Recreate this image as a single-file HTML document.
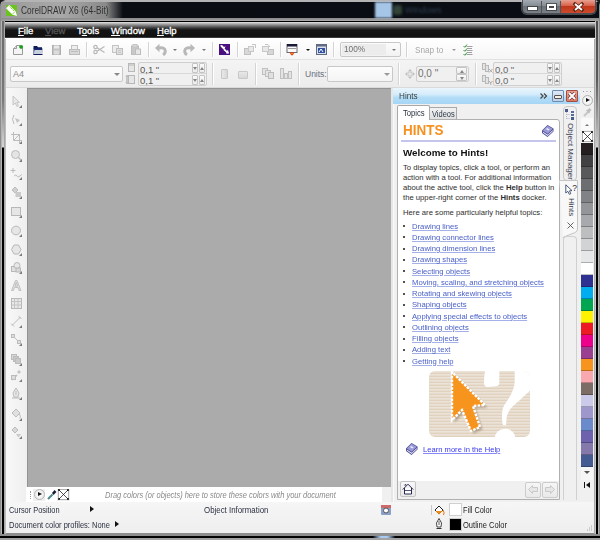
<!DOCTYPE html>
<html><head><meta charset="utf-8">
<style>
*{box-sizing:border-box;margin:0;padding:0}
html,body{width:600px;height:540px;overflow:hidden;background:#1a1a1a}
body{position:relative;font-family:"Liberation Sans",sans-serif;font-size:8px;color:#333;line-height:1}
.a{position:absolute}
.t{position:absolute;white-space:nowrap;transform-origin:0 0}
svg{position:absolute;overflow:visible}
/* frame */
#frame{left:0;top:0;width:600px;height:540px;background:#8c8c8c;border-radius:6px 6px 0 0}
#fl{left:1px;top:19px;width:5px;height:515px;background:linear-gradient(90deg,#b4b4b4 0,#b4b4b4 1px,transparent 1px,transparent 3px,#a8a8a8 3px,#a8a8a8 4px,#bcbcbc 4px)}
#fl2{left:2px;top:19px;width:2px;height:515px;background:linear-gradient(#6a6a6a,#787878 80px,#c8c8c8 120px,#d4d4d4 128px,#000 129px,#000)}
#fr{left:594px;top:19px;width:5px;height:515px;background:linear-gradient(90deg,#a8a8a8 0,#a8a8a8 1px,#c4c4c4 1px,#c4c4c4 2px,transparent 2px,transparent 4px,#b4b4b4 4px)}
#fr2{left:596px;top:19px;width:2px;height:515px;background:linear-gradient(#4a4a4a,#5a5a5a 60px,#c0c0c0 120px,#d0d0d0 128px,#000 129px,#000)}
#title{left:1px;top:2px;width:598px;height:17px;background:linear-gradient(90deg,#9a9a9a 0,#a8a8a8 60px,#8a8a8a 105px,#0a0d12 122px,#0a0e14 370px,#0a0e14 100%)}
#ttop{left:4px;top:0;width:592px;height:2px;background:#b4b4b4;border-radius:6px 6px 0 0}
#tbot{left:1px;top:18px;width:598px;height:3px;background:linear-gradient(#8a8a8a,#a0a0a0)}
#menubar{left:5px;top:20px;width:590px;height:19px;background:linear-gradient(#a8a8a8 0,#a8a8a8 1px,#000 1px,#000 2px,#e6e6e6 2px,#c8c8c8 3px,#8a8a8a 5px,#3a3a3a 8px,#151515 10px,#111 17px,#3a3a3a 17px,#3a3a3a 18px,#fff 18px)}
.menu{top:26px;color:#fff;font-size:9.5px;font-weight:normal;-webkit-text-stroke:0.3px currentColor}
.menu u{text-decoration-thickness:1px;text-underline-offset:1px}
#stdbar{left:6px;top:38px;width:588px;height:22px;background:linear-gradient(#ffffff,#f6f6f6);border-bottom:1px solid #e2e2e2}
#propbar{left:6px;top:60px;width:588px;height:28px;background:linear-gradient(#f4f4f4,#ececec);border-bottom:1px solid #dadada}
.sep{position:absolute;width:1px;background:#d4d4d4;box-shadow:1px 0 0 #fff}
.combo{position:absolute;background:linear-gradient(#fbfbfb,#f2f2f2);border:1px solid #c8c8c8;border-radius:2px}
.ctext{position:absolute;color:#8a8a8a;font-size:9px}
.dd{position:absolute;width:0;height:0;border-left:3px solid transparent;border-right:3px solid transparent;border-top:3px solid #777}
.spinb{width:6px;height:10px;border:1px solid #c4c4c4;border-radius:1px;background:linear-gradient(#fafafa,#ececec)}
.spinb:after{content:"";position:absolute;left:0;top:3px;border-left:2px solid transparent;border-right:2px solid transparent;border-top:3px solid #858585}
.spinb.up:after{border-top:none;border-bottom:3px solid #858585}
.spinb.big:after{left:3px;top:1.5px}
#toolbox{left:6px;top:88px;width:21px;height:414px;background:linear-gradient(90deg,#f8f8f8,#efefef)}
.fly{width:0;height:0;border-left:3px solid transparent;border-bottom:3px solid #7a7a7a}
#canvas{left:27px;top:88px;width:364px;height:399px;background:#ababab;border-top:1px solid #939393;border-left:1px solid #939393}
#palbar{left:26px;top:487px;width:356px;height:15px;background:#fff}
#palbar2{left:382px;top:487px;width:11px;height:15px;background:#f0f0f0}
#docker{left:391px;top:88px;width:189px;height:414px;background:#f0f0f0;border-left:2px solid #e6e6e6}
#dline{left:393px;top:103px;width:1px;height:399px;background:#fafafa}
#dhead{left:393px;top:88px;width:187px;height:15.5px;background:linear-gradient(#eaf5fd,#d4ecfb 40%,#b2dcf7 60%,#a6d6f5)}
.bul{width:2px;height:2px;background:#333;opacity:.85}
.lnk{font-size:8px;color:#4a60c8;text-decoration:underline;text-decoration-color:#a4b0e8;transform:scaleX(0.96)}
.navb{width:16px;height:16px;border:1px solid #c4c4c4;border-radius:2px;background:linear-gradient(#f8f8f8,#e8e8e8)}
#palette{left:580px;top:88px;width:14px;height:414px;background:#f0f0f0}
#status{left:6px;top:502px;width:588px;height:31px;background:linear-gradient(#f6f6f6,#eeeeee)}
#bottom{left:0;top:534px;width:600px;height:6px;background:linear-gradient(#8e8e8e 0,#8e8e8e 1.5px,#050505 1.5px,#000 4px,#a2a2a2 4px)}
</style></head>
<body>
<div id="frame" class="a"></div>
<div id="fl2" class="a"></div><div id="fl" class="a"></div>
<div id="fr2" class="a"></div><div id="fr" class="a"></div>
<div id="title" class="a"></div>
<div id="ttop" class="a"></div>
<div id="tbot" class="a"></div>
<!-- title content -->
<svg style="left:6px;top:5px" width="11" height="11" viewBox="0 0 11 11"><rect width="11" height="11" fill="#6cc21e"/><path d="M0 3.3 L3.3 0 L9.8 6.6 L11 11 L6.6 9.8 Z" fill="#fff"/><path d="M3.6 1.6 L8.4 6.4" stroke="#6cc21e" stroke-width="1" stroke-dasharray="1.4 0.9"/><path d="M6.3 9.3 L9.3 6.3" stroke="#6cc21e" stroke-width="0.7"/></svg>
<div class="t" style="left:21px;top:5px;font-size:11px;color:#333;transform:scaleX(0.76)">CorelDRAW X6 (64-Bit)</div>
<!-- fake windows bg in title -->
<div class="a" style="left:375px;top:2px;width:17px;height:16px;background:#a6c6e8;filter:blur(0.8px)"></div>
<div class="a" style="left:393px;top:5px;width:9px;height:10px;background:#5a7a5a;opacity:.5;border-radius:3px;filter:blur(1.5px)"></div>
<div class="t" style="left:405px;top:5.5px;font-size:9px;color:#3a4a60;opacity:.75;filter:blur(1.3px)">Windows</div>
<!-- caption buttons -->
<div class="a" style="left:522px;top:0;width:74px;height:14px;border:1px solid #4a4e54;border-top:none;border-radius:0 0 5px 5px;background:linear-gradient(#a4aab2,#868c94 45%,#6c7279 50%,#7a8088);box-shadow:0 0 0 1px rgba(255,255,255,.25)"></div>
<div class="a" style="left:541px;top:1px;width:1px;height:12px;background:#50545a"></div>
<div class="a" style="left:560px;top:1px;width:1px;height:12px;background:#50545a"></div>
<div class="a" style="left:561px;top:0;width:34px;height:13px;border-radius:0 0 4px 0;background:linear-gradient(#e8a090,#d8604a 45%,#c0381c 50%,#cc4a2c)"></div>
<div class="a" style="left:528px;top:7px;width:9px;height:3px;background:#fff;box-shadow:0 0 0 1px rgba(40,40,40,.6)"></div>
<div class="a" style="left:547px;top:4px;width:9px;height:6px;border:2px solid #fff;box-shadow:0 0 0 1px rgba(40,40,40,.6), inset 0 0 0 1px rgba(40,40,40,.6)"></div>
<svg style="left:574px;top:3px" width="9" height="8" viewBox="0 0 9 8"><path d="M1 1 L8 7 M8 1 L1 7" stroke="#5a2010" stroke-width="3.2" stroke-linecap="square"/><path d="M1 1 L8 7 M8 1 L1 7" stroke="#fff" stroke-width="1.8"/></svg>
<div id="menubar" class="a"></div>
<div class="t menu" style="left:18px"><u>F</u>ile</div>
<div class="t menu" style="left:45px;color:#555"><u>V</u>iew</div>
<div class="t menu" style="left:77px">T<u>o</u>ols</div>
<div class="t menu" style="left:111px"><u>W</u>indow</div>
<div class="t menu" style="left:157px"><u>H</u>elp</div>

<div id="stdbar" class="a"></div>
<div id="propbar" class="a"></div>
<!-- std toolbar content -->
<svg style="left:13px;top:45px" width="10" height="10" viewBox="0 0 10 10"><path d="M0.5 3.5 L3.5 0.5 L7 0.5 L7 3 L9.5 3 L9.5 9.5 L0.5 9.5 Z" fill="#f4f4f4" stroke="#9a9a9a"/><path d="M0.5 3.5 L3.5 3.5 L3.5 0.5" fill="#ddd" stroke="#9a9a9a"/><circle cx="8.2" cy="1.8" r="1.9" fill="#1aa01a"/></svg>
<svg style="left:33px;top:45px" width="10" height="10" viewBox="0 0 10 10"><path d="M0.5 1 L4 1 L5 2.2 L9 2.2 L9 4 L0.5 4 Z" fill="#0c1a5a"/><path d="M0.5 3.5 L9.5 3.5 L9 9.5 L0.5 9.5 Z" fill="#1a2a6a"/><path d="M1.5 5 L10 5 L9 9 L0.8 9 Z" fill="#c8d0e0"/><path d="M0.5 9.5 L9.5 9.5" stroke="#0c1a5a"/></svg>
<svg style="left:52px;top:45px" width="9" height="10" viewBox="0 0 9 10"><rect x="0.5" y="0.5" width="8" height="9" fill="#c4c4c4" stroke="#b0b0b0"/><rect x="2" y="0.5" width="5" height="3" fill="#e8e8e8"/><rect x="2" y="5.5" width="5" height="4" fill="#dcdcdc"/></svg>
<svg style="left:69px;top:45px" width="11" height="10" viewBox="0 0 11 10"><rect x="2.5" y="0.5" width="6" height="4" fill="#eee" stroke="#c0c0c0"/><rect x="0.5" y="4.5" width="10" height="5" fill="#d8d8d8" stroke="#bcbcbc"/><rect x="2" y="6" width="7" height="1" fill="#bdbdbd"/></svg>
<div class="sep" style="left:86px;top:42px;height:15px"></div>
<svg style="left:93px;top:45px" width="12" height="9" viewBox="0 0 12 9"><circle cx="2.5" cy="2" r="1.7" fill="none" stroke="#b8b8b8" stroke-width="1.2"/><circle cx="2.5" cy="7" r="1.7" fill="none" stroke="#b8b8b8" stroke-width="1.2"/><path d="M4 2.8 L11.5 7.5 M4 6.2 L11.5 1.5" stroke="#b8b8b8" stroke-width="1.2"/></svg>
<svg style="left:112px;top:45px" width="11" height="10" viewBox="0 0 11 10"><rect x="0.5" y="0.5" width="6" height="7" fill="#ececec" stroke="#c4c4c4"/><rect x="4.5" y="3.5" width="6" height="6" fill="#e0e0e0" stroke="#bdbdbd"/><path d="M6 5.5h3M6 7.5h3" stroke="#c8c8c8"/></svg>
<svg style="left:131px;top:44px" width="10" height="11" viewBox="0 0 10 11"><rect x="0.5" y="2" width="7" height="8.5" fill="#c8c8c8" stroke="#bcbcbc"/><rect x="2" y="0.5" width="4" height="2.5" fill="#dadada" stroke="#c4c4c4"/><rect x="4.5" y="5" width="5" height="5.5" fill="#e6e6e6" stroke="#bdbdbd"/></svg>
<div class="sep" style="left:148px;top:42px;height:15px"></div>
<svg style="left:154px;top:43px" width="14" height="13" viewBox="0 0 14 13"><path d="M1 5 L5.5 0.8 L5.5 9.2 Z" fill="#b8b8b8"/><path d="M5 5 Q11 4 11.3 8 Q11.3 10.5 9 11.8" stroke="#b8b8b8" stroke-width="3" fill="none"/></svg>
<div class="dd" style="left:173px;top:49px;border-left-width:2px;border-right-width:2px;border-top:2px solid #777"></div>
<svg style="left:182px;top:43px" width="14" height="13" viewBox="0 0 14 13"><path d="M13 5 L8.5 0.8 L8.5 9.2 Z" fill="#b8b8b8"/><path d="M9 5 Q3 4 2.7 8 Q2.7 10.5 5 11.8" stroke="#b8b8b8" stroke-width="3" fill="none"/></svg>
<div class="dd" style="left:202px;top:49px;border-left-width:2px;border-right-width:2px;border-top:2px solid #777"></div>
<div class="sep" style="left:212px;top:42px;height:15px"></div>
<svg style="left:219px;top:44px" width="11" height="11" viewBox="0 0 11 11"><rect width="11" height="11" fill="#4a1080"/><path d="M1 1.5 L3 1 L5 3 L6.5 2.2 L5.5 5 L4 4 Z" fill="#fff"/><path d="M4.5 6 L6 5.3 L7.5 7 L9 6 L10 9.5 L7 9.5 L7.5 8.5 Z" fill="#fff"/><path d="M2 2 L9 9" stroke="#fff" stroke-width="1.2"/></svg>
<div class="sep" style="left:237px;top:42px;height:15px"></div>
<svg style="left:244px;top:44px" width="12" height="11" viewBox="0 0 12 11"><rect x="0.5" y="4.5" width="6" height="6" fill="#d8d8d8" stroke="#c0c0c0"/><rect x="4.5" y="2.5" width="5" height="5" fill="#e8e8e8" stroke="#c8c8c8"/><path d="M8 0.5 L11.5 0.5 L11.5 4" stroke="#c4c4c4" fill="none"/></svg>
<svg style="left:262px;top:44px" width="12" height="11" viewBox="0 0 12 11"><rect x="5.5" y="5.5" width="6" height="5" fill="#d8d8d8" stroke="#c0c0c0"/><rect x="0.5" y="2.5" width="6" height="5" fill="#e8e8e8" stroke="#c8c8c8"/><path d="M3 0.5 L6 0.5 L8 3" stroke="#c4c4c4" fill="none"/></svg>
<div class="sep" style="left:280px;top:42px;height:15px"></div>
<svg style="left:287px;top:44px" width="10" height="12" viewBox="0 0 10 12"><rect x="0" y="0.5" width="10" height="8" fill="#fafafa" stroke="#6a6a6a" stroke-width="1"/><rect x="0" y="0" width="10" height="2.5" fill="#1a1a3a"/><rect x="1" y="4" width="8" height="1" fill="#9a9a9a"/><path d="M3 9 Q5 7 7 9 Q6 11.5 5 11.5 Q4 11.5 3 9 Z" fill="#e83010"/><path d="M4 9.5 Q5 8.5 6 9.5 Q5.5 10.5 5 10.5 Z" fill="#f8c020"/></svg>
<div class="dd" style="left:306px;top:49px;border-left-width:2px;border-right-width:2px;border-top:2px solid #111"></div>
<svg style="left:316px;top:44px" width="11" height="11" viewBox="0 0 11 11"><rect x="0.5" y="0.5" width="10" height="10" fill="#d8e0ec" stroke="#606a80"/><rect x="0.5" y="0.5" width="10" height="2" fill="#606a80"/><rect x="2" y="4" width="7" height="5" fill="#3050a0"/><path d="M3 8 L5 5 L7 8" stroke="#fff" fill="none"/></svg>
<div class="sep" style="left:333px;top:42px;height:15px"></div>
<div class="combo" style="left:340px;top:42px;width:61px;height:15px"></div>
<div class="a" style="left:342px;top:44px;width:44px;height:11px;background:#ececec"></div>
<div class="ctext" style="left:344px;top:45px;font-size:9.2px;color:#6e6e6e;transform:scaleX(0.9);transform-origin:0 0">100%</div>
<div class="dd" style="left:392px;top:49px;border-left-width:2.5px;border-right-width:2.5px;border-top:2.5px solid #777"></div>
<div class="sep" style="left:406px;top:42px;height:15px"></div>
<div class="ctext" style="left:415px;top:45.5px;font-size:9.3px;color:#a8a8a8;transform:scaleX(0.88);transform-origin:0 0">Snap to</div>
<div class="dd" style="left:452px;top:49px;border-left-width:2px;border-right-width:2px;border-top:2px solid #999"></div>
<svg style="left:463px;top:44px" width="11" height="12" viewBox="0 0 11 12"><path d="M0.5 2 L1.8 3.3 L4 0.5 M0.5 6 L1.8 7.3 L4 4.5 M0.5 10 L1.8 11.3 L4 8.5" stroke="#3a9a3a" fill="none" stroke-width="1"/><path d="M3.5 2.5h6M3.5 6.5h6M3.5 10.5h6M4 4.5h5M4 8.5h5" stroke="#8a8a8a" stroke-width="0.8"/></svg>


<!-- property bar content -->
<div class="combo" style="left:10px;top:66px;width:113px;height:16px;background:linear-gradient(#fdfdfd,#f4f4f4)"></div>
<div class="ctext" style="left:13px;top:70px;font-size:9px;color:#8a8a8a">A4</div>
<div class="dd" style="left:114px;top:73px;border-top-color:#888"></div>
<svg style="left:128px;top:63px" width="7" height="9" viewBox="0 0 7 9"><rect x="0.5" y="0.5" width="6" height="8" fill="#e6e6e6" stroke="#b8b8b8"/><path d="M0.5 2h6" stroke="#b8b8b8"/></svg>
<svg style="left:126px;top:75px" width="9" height="9" viewBox="0 0 9 9"><rect x="2.5" y="0.5" width="6" height="8" fill="#e6e6e6" stroke="#b8b8b8"/><path d="M1 0.5v8M0 1.5l1-1 1 1M0 7.5l1 1 1-1" stroke="#a0a0a0" fill="none"/></svg>
<div class="combo" style="left:138px;top:62px;width:69px;height:24px;background:#f0f0f0;border-color:#cfcfcf"></div>
<div class="a" style="left:139px;top:73px;width:67px;height:1px;background:#d8d8d8"></div>
<div class="ctext" style="left:140px;top:65px;font-size:9.5px;color:#555">0,1 "</div>
<div class="ctext" style="left:140px;top:76px;font-size:9.5px;color:#555">0,1 "</div>
<div class="a spinb" style="left:192px;top:63px"></div><div class="a spinb up" style="left:199px;top:63px"></div>
<div class="a spinb" style="left:192px;top:75px"></div><div class="a spinb up" style="left:199px;top:75px"></div>
<div class="sep" style="left:212px;top:63px;height:22px"></div>
<div class="a" style="left:221px;top:69px;width:7px;height:10px;border:1px solid #c8c8c8;border-radius:1px;background:linear-gradient(90deg,#e8e8e8,#d8d8d8)"></div>
<div class="a" style="left:238px;top:71px;width:10px;height:8px;border:1px solid #c8c8c8;border-radius:1px;background:linear-gradient(#e8e8e8,#d8d8d8)"></div>
<div class="sep" style="left:255px;top:63px;height:22px"></div>
<svg style="left:262px;top:68px" width="12" height="11" viewBox="0 0 12 11"><rect x="0.5" y="0.5" width="5" height="6" fill="#e4e4e4" stroke="#c0c0c0"/><rect x="3.5" y="2.5" width="5" height="6" fill="#e4e4e4" stroke="#c0c0c0"/><rect x="6.5" y="4.5" width="5" height="6" fill="#e0e0e0" stroke="#bcbcbc"/></svg>
<svg style="left:280px;top:68px" width="12" height="11" viewBox="0 0 12 11"><rect x="0.5" y="0.5" width="3" height="10" fill="#e4e4e4" stroke="#c0c0c0"/><rect x="4.5" y="5.5" width="3" height="5" fill="#e4e4e4" stroke="#c0c0c0"/><rect x="8.5" y="3.5" width="3" height="7" fill="#e4e4e4" stroke="#c0c0c0"/></svg>
<div class="sep" style="left:298px;top:63px;height:22px"></div>
<div class="ctext" style="left:305px;top:70px;font-size:8.5px;color:#6a7080">Units:</div>
<div class="combo" style="left:327px;top:66px;width:66px;height:16px;background:linear-gradient(#fdfdfd,#f4f4f4)"></div>
<div class="dd" style="left:384px;top:73px;border-top-color:#999"></div>
<div class="sep" style="left:398px;top:63px;height:22px"></div>
<svg style="left:405px;top:69px" width="10" height="10" viewBox="0 0 10 10"><path d="M5 0 L7 2.2 L3 2.2 Z M5 10 L3 7.8 L7 7.8 Z M0 5 L2.2 3 L2.2 7 Z M10 5 L7.8 7 L7.8 3 Z" fill="#c0c0c0"/><rect x="3" y="3" width="4" height="4" fill="#e8e8e8" stroke="#c4c4c4" stroke-width="0.8"/></svg>
<div class="combo" style="left:416px;top:66px;width:53px;height:16px;background:#f0f0f0;border-color:#cfcfcf"></div>
<div class="ctext" style="left:418px;top:69px;font-size:10px;color:#707070">0,0 "</div>
<div class="a spinb up big" style="left:456px;top:67px;width:11px;height:7px"></div>
<div class="a spinb big" style="left:456px;top:74px;width:11px;height:7px"></div>
<div class="sep" style="left:475px;top:63px;height:22px"></div>
<svg style="left:482px;top:63px" width="11" height="10" viewBox="0 0 11 10"><rect x="0.5" y="0.5" width="3" height="6" fill="#e4e4e4" stroke="#b8b8b8"/><rect x="3.5" y="2.5" width="3" height="6" fill="#e4e4e4" stroke="#b8b8b8"/><path d="M7 6 L10.5 9.5 M10.5 6 L7 9.5" stroke="#a8a8a8"/></svg>
<svg style="left:482px;top:75px" width="11" height="10" viewBox="0 0 11 10"><rect x="0.5" y="0.5" width="3" height="6" fill="#e4e4e4" stroke="#b8b8b8"/><rect x="3.5" y="2.5" width="3" height="6" fill="#e4e4e4" stroke="#b8b8b8"/><path d="M7 6 L8.75 8 L10.5 6 M8.75 8 L8.75 9.8" stroke="#a8a8a8" fill="none"/></svg>
<div class="combo" style="left:493px;top:62px;width:69px;height:24px;background:#f0f0f0;border-color:#cfcfcf"></div>
<div class="a" style="left:494px;top:73px;width:67px;height:1px;background:#d8d8d8"></div>
<div class="ctext" style="left:495px;top:65px;font-size:9.5px;color:#666">0,0 "</div>
<div class="ctext" style="left:495px;top:76px;font-size:9.5px;color:#666">0,0 "</div>
<div class="a spinb" style="left:547px;top:63px"></div><div class="a spinb up" style="left:554px;top:63px"></div>
<div class="a spinb" style="left:547px;top:75px"></div><div class="a spinb up" style="left:554px;top:75px"></div>
<div id="toolbox" class="a"></div>
<!-- toolbox icons -->
<svg style="left:11px;top:96px" width="11" height="11" viewBox="0 0 11 11"><path d="M2 0 L2 9 L4.2 7 L6 10.5 L7.5 9.8 L5.8 6.5 L8.5 6.3 Z" fill="#e8e8e8" stroke="#bcbcbc" stroke-width="0.8"/></svg>
<div class="a fly" style="left:19px;top:105px"></div>
<svg style="left:11px;top:114px" width="11" height="11" viewBox="0 0 11 11"><path d="M3 1 Q0 5 3 10" stroke="#bcbcbc" fill="none"/><path d="M4 4 L9 6 L6 9 Z" fill="#c4c4c4"/></svg>
<div class="a fly" style="left:19px;top:123px"></div>
<svg style="left:11px;top:132px" width="11" height="11" viewBox="0 0 11 11"><path d="M2.5 0v8.5h8.5M0 2.5h8.5v8.5" stroke="#bcbcbc" fill="none"/><path d="M3 8 L9 2" stroke="#bcbcbc"/></svg>
<div class="a fly" style="left:19px;top:141px"></div>
<svg style="left:11px;top:150px" width="11" height="11" viewBox="0 0 11 11"><circle cx="4.5" cy="4.5" r="4" fill="#e4e4e4" stroke="#bcbcbc"/><path d="M7.5 7.5 L10.5 10.5" stroke="#bcbcbc" stroke-width="1.4"/></svg>
<div class="a fly" style="left:19px;top:159px"></div>
<svg style="left:11px;top:168px" width="11" height="11" viewBox="0 0 11 11"><path d="M2 0v5M-0.5 2.5h5" stroke="#bcbcbc"/><path d="M3 8 Q5 6 6 8 T9 8 T11 7" stroke="#bcbcbc" fill="none"/></svg>
<div class="a fly" style="left:19px;top:177px"></div>
<svg style="left:11px;top:187px" width="11" height="11" viewBox="0 0 11 11"><path d="M1 3 L4 0 L7 3 L4 6 Z" fill="#d0d0d0" stroke="#bcbcbc"/><rect x="4.5" y="5" width="5.5" height="5" fill="#cacaca"/></svg>
<div class="a fly" style="left:19px;top:196px"></div>
<svg style="left:11px;top:206px" width="11" height="11" viewBox="0 0 11 11"><rect x="0.5" y="1.5" width="9" height="8" fill="#e6e6e6" stroke="#b8b8b8"/></svg>
<div class="a fly" style="left:19px;top:215px"></div>
<svg style="left:11px;top:225px" width="11" height="11" viewBox="0 0 11 11"><ellipse cx="5" cy="5.5" rx="4.5" ry="4.3" fill="#e6e6e6" stroke="#b8b8b8"/></svg>
<div class="a fly" style="left:19px;top:234px"></div>
<svg style="left:11px;top:244px" width="11" height="11" viewBox="0 0 11 11"><path d="M3 1 L7.5 1 L10 5.5 L7.5 10 L3 10 L0.5 5.5 Z" fill="#e6e6e6" stroke="#b8b8b8"/></svg>
<div class="a fly" style="left:19px;top:253px"></div>
<svg style="left:11px;top:262px" width="11" height="11" viewBox="0 0 11 11"><rect x="0.5" y="4.5" width="5" height="5" fill="#e0e0e0" stroke="#b8b8b8"/><circle cx="6" cy="3.5" r="3" fill="#e8e8e8" stroke="#b8b8b8"/><rect x="5" y="6" width="4.5" height="4" fill="#d8d8d8" stroke="#b8b8b8"/></svg>
<div class="a fly" style="left:19px;top:271px"></div>
<svg style="left:11px;top:280px" width="11" height="11" viewBox="0 0 11 11"><path d="M0.5 10.5 L4.5 0.5 L6 0.5 L10 10.5 L8 10.5 L7 7.5 L3.5 7.5 L2.5 10.5 Z M4 6 L6.5 6 L5.2 2.5 Z" fill="#e0e0e0" stroke="#b8b8b8" stroke-width="0.8"/></svg>
<svg style="left:11px;top:298px" width="11" height="11" viewBox="0 0 11 11"><rect x="0.5" y="0.5" width="10" height="10" fill="#e8e8e8" stroke="#b8b8b8"/><path d="M0.5 3.5h10M0.5 7h10M3.5 0.5v10M7 0.5v10" stroke="#c4c4c4"/></svg>
<svg style="left:11px;top:316px" width="11" height="11" viewBox="0 0 11 11"><path d="M1 9.5 L9.5 1 M0 7.5 L3 10.5 M7.5 0 L10.5 3" stroke="#bcbcbc"/></svg>
<div class="a fly" style="left:19px;top:325px"></div>
<svg style="left:11px;top:334px" width="11" height="11" viewBox="0 0 11 11"><rect x="0.5" y="0.5" width="3" height="3" fill="#ddd" stroke="#bcbcbc"/><rect x="6.5" y="6.5" width="3" height="3" fill="#ddd" stroke="#bcbcbc"/><path d="M3 3 L7 7" stroke="#bcbcbc"/></svg>
<div class="a fly" style="left:19px;top:343px"></div>
<svg style="left:11px;top:354px" width="11" height="11" viewBox="0 0 11 11"><rect x="0.5" y="0.5" width="5" height="5" fill="#d8d8d8" stroke="#bcbcbc"/><rect x="2.5" y="2.5" width="5" height="5" fill="#c8c8c8" stroke="#bcbcbc"/><rect x="4.5" y="4.5" width="5" height="5" fill="#cacaca" stroke="#bcbcbc"/></svg>
<div class="a fly" style="left:19px;top:363px"></div>
<svg style="left:11px;top:370px" width="11" height="11" viewBox="0 0 11 11"><path d="M1 10 L6 5" stroke="#bcbcbc" stroke-width="1.5"/><rect x="0.5" y="5.5" width="4" height="4" fill="#ddd" stroke="#bcbcbc"/><path d="M6 2 L8 0 L10 2 L8 4 Z" fill="#c4c4c4"/></svg>
<div class="a fly" style="left:19px;top:379px"></div>
<svg style="left:11px;top:388px" width="11" height="11" viewBox="0 0 11 11"><path d="M5 0 L8 5 L7 9 L3 9 L2 5 Z" fill="#e8e8e8" stroke="#bcbcbc"/><path d="M5 3v4" stroke="#bcbcbc"/><path d="M1 10h8" stroke="#b8b8b8"/></svg>
<div class="a fly" style="left:19px;top:397px"></div>
<svg style="left:11px;top:409px" width="11" height="11" viewBox="0 0 11 11"><path d="M1 4 L5 0 L9 4 L5 8 Z" fill="#e0e0e0" stroke="#bcbcbc"/><path d="M8.5 5 Q10 8 9 9.5" stroke="#bcbcbc" fill="none"/></svg>
<div class="a fly" style="left:19px;top:418px"></div>
<svg style="left:11px;top:427px" width="11" height="11" viewBox="0 0 11 11"><path d="M1 3 L4 0 L7 3 L4 6 Z" fill="#d8d8d8" stroke="#bcbcbc"/><path d="M5 7 L10 7 L7.5 10.5 Z" fill="#c8c8c8"/></svg>
<div class="a fly" style="left:19px;top:436px"></div>
<div id="canvas" class="a"></div>
<div id="palbar" class="a"></div>
<div id="palbar2" class="a"></div>
<div id="docker" class="a"></div>
<div id="dline" class="a"></div>
<div id="dhead" class="a"></div>

<!-- docker content -->
<div class="t" style="left:398.7px;top:91.8px;font-size:8.6px;color:#33403f;transform:scaleX(0.95)">Hints</div>
<svg style="left:540px;top:93px" width="8" height="6" viewBox="0 0 8 6"><path d="M0.5 0.5 L3 3 L0.5 5.5 M4 0.5 L6.5 3 L4 5.5" stroke="#4a4a4a" stroke-width="1.3" fill="none"/></svg>
<div class="a" style="left:552px;top:90px;width:12px;height:12px;border:1px solid #6f8bb0;border-radius:1px;background:linear-gradient(#dde8f5,#bcd0e8)"></div>
<div class="a" style="left:554px;top:95px;width:8px;height:4px;background:#f4efe6;border:1px solid #5a5050;border-radius:1px"></div>
<div class="a" style="left:566px;top:90px;width:12px;height:12px;border:1px solid #a05040;border-radius:1px;background:linear-gradient(#f0a090,#e07864)"></div>
<svg style="left:568px;top:92px" width="8" height="8" viewBox="0 0 8 8"><path d="M1 1 L7 7 M7 1 L1 7" stroke="#6a3a3a" stroke-width="3.4"/><path d="M1 1 L7 7 M7 1 L1 7" stroke="#fff" stroke-width="2"/></svg>
<!-- tabs -->
<div class="a" style="left:429px;top:107px;width:28px;height:13px;border:1px solid #a8a8a8;border-bottom:none;background:linear-gradient(#f2f2f2,#dedede)"></div>
<div class="t" style="left:432px;top:109.8px;font-size:8.8px;color:#2a3848;transform:scaleX(0.85)">Videos</div>
<div class="a" style="left:397px;top:119px;width:163px;height:381px;border:1px solid #b0b0b0;border-radius:0 3px 0 0;background:#fff"></div>
<div class="a" style="left:397px;top:105px;width:33px;height:15px;border:1px solid #a8a8a8;border-bottom:none;border-radius:2px 2px 0 0;background:#fff"></div>
<div class="t" style="left:402.7px;top:108.6px;font-size:8.8px;color:#2a3040;transform:scaleX(0.87)">Topics</div>
<div class="t" style="left:403.3px;top:122.8px;font-size:14.8px;font-weight:bold;color:#f7901e;transform:scaleX(0.91)">HINTS</div>
<svg style="left:541px;top:124px" width="14" height="14" viewBox="0 0 14 14"><path d="M1 6.5 L6.5 1 L12.5 4.5 L12.5 7.5 L6.5 13 L1 9 Z" fill="#4a4a90"/><path d="M1.8 6.5 L6.5 1.8 L11.8 4.8 L6.8 9.8 Z" fill="#9a9ad8"/><path d="M1.8 7.5 L6.8 10.8 L11.8 6 L11.8 7.3 L6.6 12 L1.8 8.6 Z" fill="#e8e8ff"/><path d="M6 4 L8.5 5.5 L7.5 6.5 L5 5 Z" fill="#fff" opacity=".85"/></svg>
<div class="a" style="left:401px;top:140px;width:155px;height:2px;background:#c4c4ec"></div>
<div class="t" style="left:403px;top:148.5px;font-size:9.2px;font-weight:bold;color:#111;transform:scaleX(1.065)">Welcome to Hints!</div>
<div class="t" style="left:403px;top:163.3px;font-size:7.7px;color:#2e2e2e;line-height:9.85px">To display topics, click a tool, or perform an<br>action with a tool. For additional information<br>about the active tool, click the <b>Help</b> button in<br>the upper-right corner of the <b>Hints</b> docker.</div>
<div class="t" style="left:403px;top:208.5px;font-size:7.7px;color:#2e2e2e">Here are some particularly helpful topics:</div>
<div class="a bul" style="left:403px;top:225.00px"></div><div class="t lnk" style="left:412px;top:222.50px">Drawing lines</div>
<div class="a bul" style="left:403px;top:236.25px"></div><div class="t lnk" style="left:412px;top:233.75px">Drawing connector lines</div>
<div class="a bul" style="left:403px;top:247.50px"></div><div class="t lnk" style="left:412px;top:245.00px">Drawing dimension lines</div>
<div class="a bul" style="left:403px;top:258.75px"></div><div class="t lnk" style="left:412px;top:256.25px">Drawing shapes</div>
<div class="a bul" style="left:403px;top:270.00px"></div><div class="t lnk" style="left:412px;top:267.50px">Selecting objects</div>
<div class="a bul" style="left:403px;top:281.25px"></div><div class="t lnk" style="left:412px;top:278.75px">Moving, scaling, and stretching objects</div>
<div class="a bul" style="left:403px;top:292.50px"></div><div class="t lnk" style="left:412px;top:290.00px">Rotating and skewing objects</div>
<div class="a bul" style="left:403px;top:303.75px"></div><div class="t lnk" style="left:412px;top:301.25px">Shaping objects</div>
<div class="a bul" style="left:403px;top:315.00px"></div><div class="t lnk" style="left:412px;top:312.50px">Applying special effects to objects</div>
<div class="a bul" style="left:403px;top:326.25px"></div><div class="t lnk" style="left:412px;top:323.75px">Outlining objects</div>
<div class="a bul" style="left:403px;top:337.50px"></div><div class="t lnk" style="left:412px;top:335.00px">Filling objects</div>
<div class="a bul" style="left:403px;top:348.75px"></div><div class="t lnk" style="left:412px;top:346.25px">Adding text</div>
<div class="a bul" style="left:403px;top:360.00px"></div><div class="t lnk" style="left:412px;top:357.50px">Getting help</div>

<!-- picture -->
<svg style="left:429px;top:371px" width="101" height="66" viewBox="0 0 101 66">
<defs><pattern id="st" width="4" height="3" patternUnits="userSpaceOnUse"><rect width="4" height="3" fill="#ece3d8"/><rect y="1.6" width="4" height="1.4" fill="#e0d2bf"/></pattern>
<filter id="bl" x="-20%" y="-20%" width="140%" height="140%"><feGaussianBlur stdDeviation="1"/></filter><clipPath id="rr"><rect width="101" height="66" rx="6"/></clipPath></defs>
<g clip-path="url(#rr)">
<rect width="101" height="66" fill="url(#st)"/>
<path d="M56 0 L70.3 0 L70.3 12.5 Q70 15 66 15.3 L59 16 Q55 16 55 12 Q55 6 56 0 Z" fill="#fff"/>
<path d="M85.7 0 L101 0 L101 19.7 C96 24 93 27 91 29 C87 32 84 35 82.3 37 C79 41 78 44 77.7 46.3 L77 54.3 L74.3 54.3 C73 52 73 49 73 42.3 C74 36 75 34 77 31.7 C80 27 82 24 83 21 C85 17 85.7 13 85.7 10.3 Z" fill="#fff"/>
<ellipse cx="76" cy="67" rx="10.3" ry="9.3" fill="#fff"/>
<path d="M25.5 3.5 L25.5 51.5 L35.5 41.5 L44.5 62.5 L53.5 58.5 L46.5 37.5 L58.5 36.5 Z" fill="#5a3a1a" opacity=".35" filter="url(#bl)"/>
<path d="M23 1 L23 49 L33 39 L42 60 L51 56 L44 35 L56 34 Z" fill="#f7941d" stroke="#fff" stroke-width="2.4" stroke-dasharray="2.6 1.2" stroke-linejoin="miter"/>
</g></svg>
<svg style="left:405px;top:442px" width="14" height="14" viewBox="0 0 14 14"><path d="M1 6.5 L6.5 1 L12.5 4.5 L12.5 7.5 L6.5 13 L1 9 Z" fill="#4a4a90"/><path d="M1.8 6.5 L6.5 1.8 L11.8 4.8 L6.8 9.8 Z" fill="#9a9ad8"/><path d="M1.8 7.5 L6.8 10.8 L11.8 6 L11.8 7.3 L6.6 12 L1.8 8.6 Z" fill="#e8e8ff"/><path d="M6 4 L8.5 5.5 L7.5 6.5 L5 5 Z" fill="#fff" opacity=".85"/></svg>
<div class="t" style="left:423px;top:446px;font-size:8px;color:#3a3af0;text-decoration:underline;text-decoration-color:#8888f8;transform:scaleX(0.95)">Learn more in the Help</div>
<!-- bottom nav -->
<div class="a" style="left:398px;top:481px;width:161px;height:18px;background:#f0f0f0"></div>
<div class="a navb" style="left:400px;top:481px"></div>
<svg style="left:402px;top:483px" width="12" height="12" viewBox="0 0 12 12"><path d="M0.8 6.5 L6 1.2 L11.2 6.5" fill="none" stroke="#2a2a50" stroke-width="1"/><path d="M2.5 5 L2.5 11 L9.5 11 L9.5 5" fill="#fff" stroke="#2a2a50" stroke-width="1"/><path d="M2.5 7.5 L9.5 7.5" stroke="#2a2a50" stroke-width="0.8"/><path d="M3 3 L3 1.5 L4.2 1.5" stroke="#2a2a50" stroke-width="0.8" fill="none"/></svg>
<div class="a navb" style="left:525px;top:482px;opacity:.8"></div>
<div class="a navb" style="left:542px;top:482px;opacity:.8"></div>
<svg style="left:528px;top:485px" width="10" height="9" viewBox="0 0 10 9"><path d="M0.5 4.5 L4.5 0.5 L4.5 2.5 L9.5 2.5 L9.5 6.5 L4.5 6.5 L4.5 8.5 Z" fill="#e6e6e6" stroke="#c8c8c8"/></svg>
<svg style="left:545px;top:485px" width="10" height="9" viewBox="0 0 10 9"><path d="M9.5 4.5 L5.5 0.5 L5.5 2.5 L0.5 2.5 L0.5 6.5 L5.5 6.5 L5.5 8.5 Z" fill="#e6e6e6" stroke="#c8c8c8"/></svg>
<!-- vertical tabs -->
<div class="a" style="left:563px;top:106px;width:14px;height:75px;border:1px solid #c8c8c8;border-radius:4px;background:#f0f0f0"></div>
<svg style="left:565px;top:109px" width="10" height="12" viewBox="0 0 10 12"><rect x="0" y="0" width="3" height="3" fill="#4a5a8a"/><rect x="6" y="2" width="3" height="2" fill="#5a6a9a"/><rect x="6" y="5" width="3" height="2" fill="#5a6a9a"/><rect x="6" y="8" width="3" height="3" fill="#4a5a8a"/><path d="M1.5 3v8M1.5 5.5h3M1.5 9.5h3" stroke="#b0b4c0" stroke-dasharray="1 1"/></svg>
<div class="t" style="left:573.5px;top:123px;font-size:8px;color:#3a4050;transform:rotate(90deg)">Object Manager</div>
<svg style="left:559px;top:180px" width="20" height="58" viewBox="0 0 20 58"><path d="M0.5 0.5 L18.5 0.5 L18.5 49 Q18.5 52 15 53 L6 56.5 L4 57.5 L4 58" fill="#f8f8f8" stroke="#c4c4c4"/></svg>
<svg style="left:565px;top:184px" width="13" height="11" viewBox="0 0 13 11"><path d="M0.8 0.8 L0.8 9 L2.8 7.3 L4.3 10.3 L5.8 9.7 L4.5 6.8 L7 6.6 Z" fill="#fff" stroke="#3a4a6a" stroke-width="0.9"/><text x="7.3" y="7" font-size="8.5" font-family="Liberation Sans" fill="#2a2a3a">?</text></svg>
<div class="t" style="left:574.5px;top:198px;font-size:8px;color:#3a3a4a;transform:rotate(90deg)">Hints</div>
<svg style="left:567px;top:222px" width="7" height="7" viewBox="0 0 7 7"><path d="M0.5 0.5 L6.5 6.5 M6.5 0.5 L0.5 6.5" stroke="#555" stroke-width="0.9"/></svg>
<div class="a" style="left:563px;top:236px;width:14px;height:264px;border:1px solid #d0d0d0;border-bottom:none;border-radius:4px 4px 0 0;background:#f0f0f0"></div>
<div id="palette" class="a"></div>
<div id="status" class="a"></div>
<!-- palette -->
<div class="a" style="left:583px;top:91px;width:1px;height:1px;background:#999;box-shadow:3.5px 0 0 #999,7px 0 0 #999"></div>
<div class="a" style="left:582px;top:95px;width:11px;height:11px;border-radius:50%;border:1px solid #b0b0b0;background:radial-gradient(#fff,#e8e8e8)"></div>
<div class="a" style="left:586px;top:98px;width:0;height:0;border-top:2.5px solid transparent;border-bottom:2.5px solid transparent;border-left:4px solid #111"></div>
<svg style="left:583px;top:107px" width="9" height="10" viewBox="0 0 9 10"><path d="M1 9 L5 5" stroke="#c8c8c8" stroke-width="2.2"/><path d="M4 3.5 L6.5 1 L8.5 3 L6 5.5 Z" fill="#bcbcbc"/><path d="M3.5 3 L6.5 6" stroke="#bcbcbc" stroke-width="1.2"/></svg>
<div class="a" style="left:581px;top:118px;width:12px;height:12px;background:#fafafa"></div>
<div class="a" style="left:584.5px;top:123.5px;width:0;height:0;border-left:2.5px solid transparent;border-right:2.5px solid transparent;border-bottom:2.5px solid #777"></div>
<svg style="left:582px;top:131px" width="11" height="11" viewBox="0 0 11 11"><rect x="0.5" y="0.5" width="10" height="10" fill="#fff" stroke="#a0a0a0" stroke-width="0.8"/><path d="M1 1 L10 10 M10 1 L1 10" stroke="#222" stroke-width="0.8"/><circle cx="1" cy="1" r="0.9" fill="#000"/><circle cx="10" cy="1" r="0.9" fill="#000"/><circle cx="1" cy="10" r="0.9" fill="#000"/><circle cx="10" cy="10" r="0.9" fill="#000"/></svg>
<div class="a" style="left:581px;top:143px;width:12px;height:12px;background:#231f20;border-bottom:1px solid rgba(0,0,0,.25)"></div>
<div class="a" style="left:581px;top:155px;width:12px;height:12px;background:#414042;border-bottom:1px solid rgba(0,0,0,.25)"></div>
<div class="a" style="left:581px;top:167px;width:12px;height:12px;background:#58595b;border-bottom:1px solid rgba(0,0,0,.25)"></div>
<div class="a" style="left:581px;top:179px;width:12px;height:12px;background:#6d6e71;border-bottom:1px solid rgba(0,0,0,.25)"></div>
<div class="a" style="left:581px;top:191px;width:12px;height:12px;background:#808285;border-bottom:1px solid rgba(0,0,0,.25)"></div>
<div class="a" style="left:581px;top:203px;width:12px;height:12px;background:#939598;border-bottom:1px solid rgba(0,0,0,.25)"></div>
<div class="a" style="left:581px;top:215px;width:12px;height:12px;background:#a7a9ac;border-bottom:1px solid rgba(0,0,0,.25)"></div>
<div class="a" style="left:581px;top:227px;width:12px;height:12px;background:#bcbec0;border-bottom:1px solid rgba(0,0,0,.25)"></div>
<div class="a" style="left:581px;top:239px;width:12px;height:12px;background:#d1d3d4;border-bottom:1px solid rgba(0,0,0,.25)"></div>
<div class="a" style="left:581px;top:251px;width:12px;height:12px;background:#e6e7e8;border-bottom:1px solid rgba(0,0,0,.25)"></div>
<div class="a" style="left:581px;top:263px;width:12px;height:12px;background:#ffffff;border-bottom:1px solid rgba(0,0,0,.25)"></div>
<div class="a" style="left:581px;top:275px;width:12px;height:12px;background:#2e3192;border-bottom:1px solid rgba(0,0,0,.25)"></div>
<div class="a" style="left:581px;top:287px;width:12px;height:12px;background:#00aeef;border-bottom:1px solid rgba(0,0,0,.25)"></div>
<div class="a" style="left:581px;top:299px;width:12px;height:12px;background:#00a651;border-bottom:1px solid rgba(0,0,0,.25)"></div>
<div class="a" style="left:581px;top:311px;width:12px;height:12px;background:#fff200;border-bottom:1px solid rgba(0,0,0,.25)"></div>
<div class="a" style="left:581px;top:323px;width:12px;height:12px;background:#ed1c24;border-bottom:1px solid rgba(0,0,0,.25)"></div>
<div class="a" style="left:581px;top:335px;width:12px;height:12px;background:#ec008c;border-bottom:1px solid rgba(0,0,0,.25)"></div>
<div class="a" style="left:581px;top:347px;width:12px;height:12px;background:#9b3f90;border-bottom:1px solid rgba(0,0,0,.25)"></div>
<div class="a" style="left:581px;top:359px;width:12px;height:12px;background:#f7941d;border-bottom:1px solid rgba(0,0,0,.25)"></div>
<div class="a" style="left:581px;top:371px;width:12px;height:12px;background:#f9a8b0;border-bottom:1px solid rgba(0,0,0,.25)"></div>
<div class="a" style="left:581px;top:383px;width:12px;height:12px;background:#7d6b66;border-bottom:1px solid rgba(0,0,0,.25)"></div>
<div class="a" style="left:581px;top:395px;width:12px;height:12px;background:#cccaea;border-bottom:1px solid rgba(0,0,0,.25)"></div>
<div class="a" style="left:581px;top:407px;width:12px;height:12px;background:#9e97cb;border-bottom:1px solid rgba(0,0,0,.25)"></div>
<div class="a" style="left:581px;top:419px;width:12px;height:12px;background:#6a8acb;border-bottom:1px solid rgba(0,0,0,.25)"></div>
<div class="a" style="left:581px;top:431px;width:12px;height:12px;background:#6e62ae;border-bottom:1px solid rgba(0,0,0,.25)"></div>
<div class="a" style="left:581px;top:443px;width:12px;height:12px;background:#8479aa;border-bottom:1px solid rgba(0,0,0,.25)"></div>
<div class="a" style="left:581px;top:455px;width:12px;height:12px;background:#435b90;border-bottom:1px solid rgba(0,0,0,.25)"></div>
<div class="a" style="left:581px;top:467px;width:12px;height:13px;background:#f6f6f6"></div>
<div class="a" style="left:584px;top:471px;width:0;height:0;border-left:3px solid transparent;border-right:3px solid transparent;border-top:3px solid #555"></div>
<div class="a" style="left:584px;top:482px;width:1px;height:6px;background:#111"></div><div class="a" style="left:586px;top:482px;width:0;height:0;border-top:3px solid transparent;border-bottom:3px solid transparent;border-right:4px solid #111"></div>
<!-- palette bar -->
<div class="a" style="left:30px;top:491px;width:1px;height:8px;border-left:1px dotted #999"></div>
<div class="a" style="left:33px;top:489px;width:12px;height:12px;background:#eeeeee"></div><div class="a" style="left:34px;top:489px;width:11px;height:11px;border-radius:50%;border:1px solid #b8b8b8;background:radial-gradient(#fff,#e4e4e4)"></div>
<div class="a" style="left:38px;top:492px;width:0;height:0;border-top:2.5px solid transparent;border-bottom:2.5px solid transparent;border-left:4px solid #111"></div>
<svg style="left:47px;top:489px" width="10" height="11" viewBox="0 0 10 11"><path d="M1 10 L5.5 5.5" stroke="#4a8a8a" stroke-width="2"/><path d="M5 4 L7.5 1 L9.5 3 L6.5 6 Z" fill="#1a1a3a"/></svg>
<div class="a" style="left:57px;top:489px;width:13px;height:12px;background:#ececec"></div><svg style="left:58px;top:489px" width="11" height="11" viewBox="0 0 11 11"><rect x="0.5" y="0.5" width="10" height="10" fill="#fff" stroke="#a0a0a0" stroke-width="0.8"/><path d="M1 1 L10 10 M10 1 L1 10" stroke="#222" stroke-width="0.8"/><circle cx="1" cy="1" r="0.9" fill="#000"/><circle cx="10" cy="1" r="0.9" fill="#000"/><circle cx="1" cy="10" r="0.9" fill="#000"/><circle cx="10" cy="10" r="0.9" fill="#000"/></svg>
<div class="t" style="left:105px;top:490.5px;font-size:9px;font-style:italic;color:#8a8a8a;transform:scaleX(0.83)">Drag colors (or objects) here to store these colors with your document</div>
<!-- status bar -->
<div class="t" style="left:9px;top:505.8px;font-size:8.8px;color:#2a3040;transform:scaleX(0.84)">Cursor Position</div>
<div class="a" style="left:90px;top:506px;width:0;height:0;border-top:3px solid transparent;border-bottom:3px solid transparent;border-left:4px solid #111"></div>
<div class="t" style="left:9px;top:520.8px;font-size:8.8px;color:#2a3040;transform:scaleX(0.853)">Document color profiles: None</div>
<div class="a" style="left:115px;top:521px;width:0;height:0;border-top:3px solid transparent;border-bottom:3px solid transparent;border-left:4px solid #111"></div>
<div class="t" style="left:203.6px;top:505.8px;font-size:8.8px;color:#2a3040;transform:scaleX(0.896)">Object Information</div>
<svg style="left:381px;top:505px" width="10" height="10" viewBox="0 0 10 10"><rect x="0" y="0" width="10" height="10" rx="1" fill="#8aa0c8"/><rect x="0" y="0" width="10" height="3" fill="#d06a6a"/><circle cx="5" cy="5.5" r="2.5" fill="#fff" stroke="#555"/></svg>
<div class="a" style="left:431px;top:505px;width:1px;height:10px;background:#c8c8c8"></div>
<svg style="left:434px;top:505px" width="11" height="11" viewBox="0 0 11 11"><path d="M1 5 L5 1 L9 5 L5 9 Z" fill="#fff" stroke="#222" stroke-width="1"/><path d="M1.5 6 L8.5 6 L5 9.5 Z" fill="#f08a1a"/><path d="M9 5 Q11 8 9.5 10" stroke="#e07010" fill="none"/></svg>
<div class="a" style="left:449px;top:503px;width:13px;height:13px;background:#fff;border:1px solid #d0d0d0"></div>
<div class="t" style="left:463px;top:505.8px;font-size:8.8px;color:#222;transform:scaleX(0.836)">Fill Color</div>
<svg style="left:436px;top:518px" width="6" height="11" viewBox="0 0 6 11"><path d="M3 0.5 L5.5 5 L5 9 L1 9 L0.5 5 Z" fill="#fff" stroke="#333" stroke-width="0.9"/><path d="M3 3v4" stroke="#333" stroke-width="0.8"/><path d="M0.5 10.5h5" stroke="#333"/></svg>
<div class="a" style="left:449px;top:518px;width:13px;height:13px;background:#000;border:1px solid #d0d0d0"></div>
<div class="t" style="left:463px;top:520.8px;font-size:8.8px;color:#222;transform:scaleX(0.856)">Outline Color</div>
<svg style="left:585px;top:525px" width="8" height="7" viewBox="0 0 8 7"><path d="M6 1h1M4 3h1M6 3h1M2 5h1M4 5h1M6 5h1" stroke="#a8a8a8"/></svg>
<div id="bottom" class="a"></div>
<div class="a" style="left:372px;top:535.5px;width:24px;height:2.5px;background:radial-gradient(ellipse at center,#c8e0f8 0,#a8c8f0 40%,rgba(0,0,0,0) 75%)"></div>
</body></html>
